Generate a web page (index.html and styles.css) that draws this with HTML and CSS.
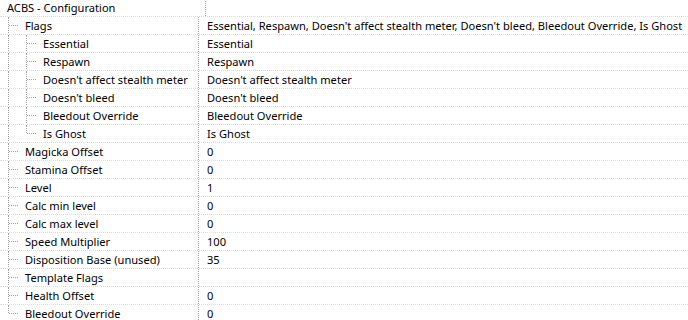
FILE: index.html
```html
<!DOCTYPE html>
<html>
<head>
  <meta charset="UTF-8">
  <title>ACBS - Configuration</title>
  <link rel="stylesheet" href="styles.css">
</head>
<body>
  <div class="tree">

    <div class="row">
      <div class="name root">ACBS - Configuration</div>
      <div class="value"></div>
    </div>

    <!-- Flags and its children -->
    <div class="row">
      <div class="name"><span class="guide tee"></span><span class="label">Flags</span></div>
      <div class="value">Essential, Respawn, Doesn't affect stealth meter, Doesn't bleed, Bleedout Override, Is Ghost</div>
    </div>
    <div class="row">
      <div class="name"><span class="guide pipe"></span><span class="guide tee"></span><span class="label">Essential</span></div>
      <div class="value">Essential</div>
    </div>
    <div class="row">
      <div class="name"><span class="guide pipe"></span><span class="guide tee"></span><span class="label">Respawn</span></div>
      <div class="value">Respawn</div>
    </div>
    <div class="row">
      <div class="name"><span class="guide pipe"></span><span class="guide tee"></span><span class="label">Doesn't affect stealth meter</span></div>
      <div class="value">Doesn't affect stealth meter</div>
    </div>
    <div class="row">
      <div class="name"><span class="guide pipe"></span><span class="guide tee"></span><span class="label">Doesn't bleed</span></div>
      <div class="value">Doesn't bleed</div>
    </div>
    <div class="row">
      <div class="name"><span class="guide pipe"></span><span class="guide tee"></span><span class="label">Bleedout Override</span></div>
      <div class="value">Bleedout Override</div>
    </div>
    <div class="row">
      <div class="name"><span class="guide pipe"></span><span class="guide elbow"></span><span class="label">Is Ghost</span></div>
      <div class="value">Is Ghost</div>
    </div>

    <!-- Remaining fields -->
    <div class="row">
      <div class="name"><span class="guide tee"></span><span class="label">Magicka Offset</span></div>
      <div class="value">0</div>
    </div>
    <div class="row">
      <div class="name"><span class="guide tee"></span><span class="label">Stamina Offset</span></div>
      <div class="value">0</div>
    </div>
    <div class="row">
      <div class="name"><span class="guide tee"></span><span class="label">Level</span></div>
      <div class="value">1</div>
    </div>
    <div class="row">
      <div class="name"><span class="guide tee"></span><span class="label">Calc min level</span></div>
      <div class="value">0</div>
    </div>
    <div class="row">
      <div class="name"><span class="guide tee"></span><span class="label">Calc max level</span></div>
      <div class="value">0</div>
    </div>
    <div class="row">
      <div class="name"><span class="guide tee"></span><span class="label">Speed Multiplier</span></div>
      <div class="value">100</div>
    </div>
    <div class="row">
      <div class="name"><span class="guide tee"></span><span class="label">Disposition Base (unused)</span></div>
      <div class="value">35</div>
    </div>
    <div class="row">
      <div class="name"><span class="guide tee"></span><span class="label">Template Flags</span></div>
      <div class="value"></div>
    </div>
    <div class="row">
      <div class="name"><span class="guide tee"></span><span class="label">Health Offset</span></div>
      <div class="value">0</div>
    </div>
    <div class="row">
      <div class="name"><span class="guide elbow"></span><span class="label">Bleedout Override</span></div>
      <div class="value">0</div>
    </div>

  </div>
</body>
</html>
```
FILE: styles.css
```css
body { margin: 0; background: #fff; font-family: "Noto Sans", "Open Sans", sans-serif; font-size: 11.1px; color: #000; overflow: hidden; }
.tree { margin-top: -1px; }
.row { display: flex; height: 18px; box-sizing: border-box; border-bottom: 1px dotted #dcdcdc; }
.name { width: 198px; flex: none; display: flex; align-items: center; border-right: 1px dotted #a0a0a0; white-space: nowrap; overflow: hidden; }
.name.root { padding-left: 7px; }
.label { padding-left: 7px; }
.value { display: flex; align-items: center; padding-left: 8px; white-space: nowrap; }

/* tree connector lines */
.guide { position: relative; width: 18px; height: 100%; flex: none; }
.guide::before, .guide::after { content: ""; position: absolute; }
.pipe::before, .tee::before { left: 8px; top: 0; bottom: -1px; border-left: 1px dotted #a0a0a0; }
.elbow::before { left: 8px; top: 0; height: 8px; border-left: 1px dotted #a0a0a0; }
.tee::after, .elbow::after { left: 9px; width: 9px; top: 8px; border-top: 1px dotted #a0a0a0; }
```
